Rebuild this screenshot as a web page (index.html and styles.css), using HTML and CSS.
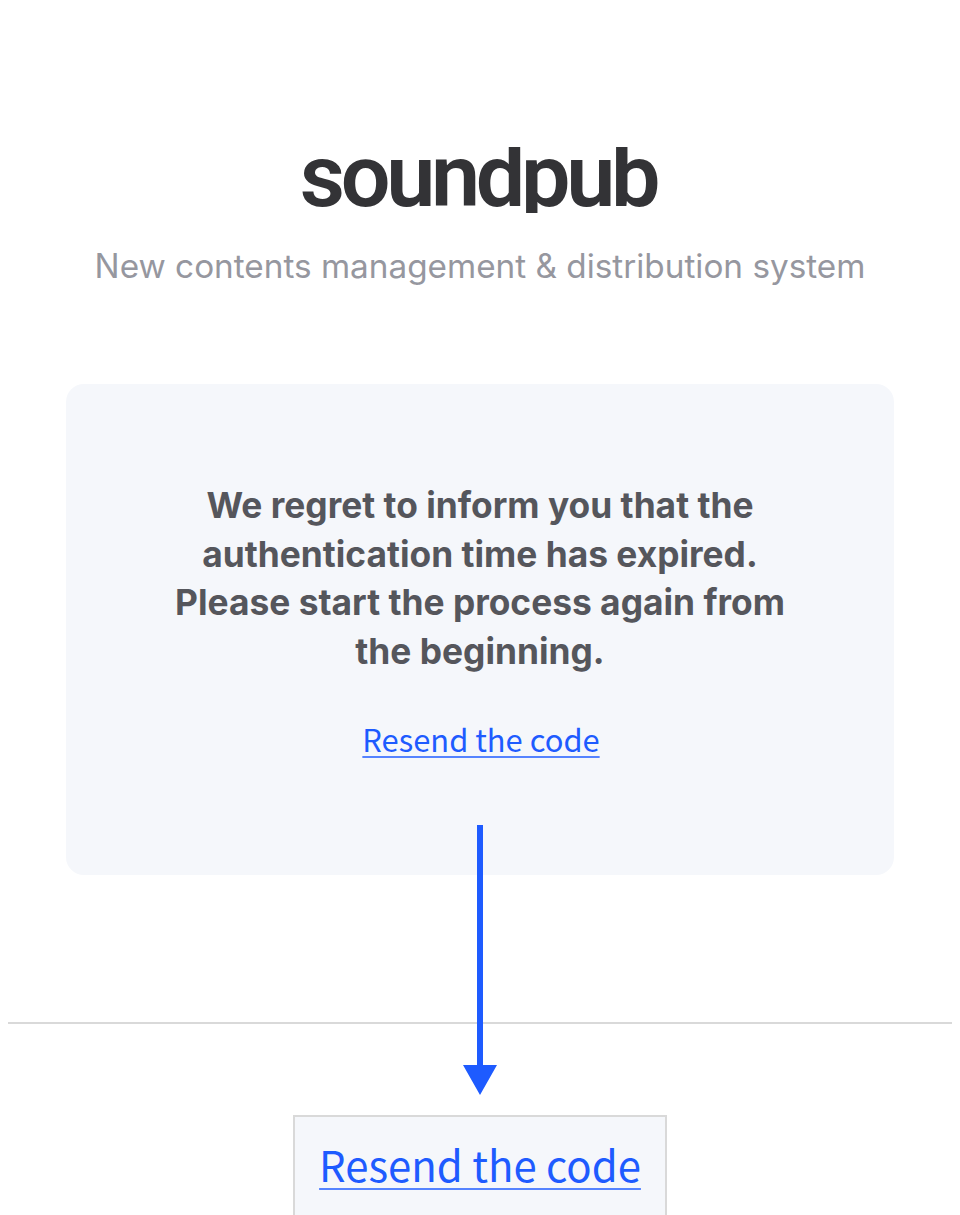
FILE: index.html
```html
<!DOCTYPE html>
<html lang="en">
<head>
  <meta charset="UTF-8">
  <title>soundpub</title>
  <link rel="stylesheet" href="styles.css">
</head>
<body>
  <main class="card">
    <h1 class="logo">soundpub</h1>
    <p class="tagline">New contents management &amp; distribution system</p>
    <section class="notice">
      <p class="message">We regret to inform you that the<br>authentication time has expired.<br>Please start the process again from<br>the beginning.</p>
      <a class="resend" href="#">Resend the code</a>
      <svg class="arrow" width="34" height="270" viewBox="0 0 34 270">
        <path d="M14 0h6v240h14l-17 30L0 240h14z" fill="#1e5bff"/>
      </svg>
    </section>
  </main>
  <div class="callout">
    <a class="resend resend-large" href="#">Resend the code</a>
  </div>
</body>
</html>
```

FILE: styles.css
```css
* {
  box-sizing: border-box;
}
body {
  margin: 0;
  height: 1215px;
  overflow: hidden;
  background: #fff;
  font-family: Inter, sans-serif;
  text-align: center;
}
.card {
  height: 1024px;
  padding: 147px 66px 0;
  background: linear-gradient(#d9d9d9, #d9d9d9) center bottom / 944px 2px no-repeat;
}
/* short ascenders and descenders */
.logo {
  height: 66px;
  margin: 0;
  padding-right: 4px;
  overflow: hidden;
  font-family: Roboto, sans-serif;
  font-size: 88px;
  line-height: 58px;
  font-weight: 600;
  letter-spacing: -4.3px;
  color: #333336;
}
.tagline {
  margin: 33px 0 0;
  font-size: 33.3px;
  line-height: 40px;
  color: #96979f;
  white-space: nowrap;
}
.notice {
  position: relative;
  height: 491px;
  margin-top: 98px;
  padding-top: 98px;
  background: #f5f7fb;
  border-radius: 18px;
}
.message {
  margin: 0;
  font-size: 35.35px;
  line-height: 48.6px;
  font-weight: 700;
  color: #55565c;
}
.resend {
  display: inline-block;
  margin: 39px 0 0 2px;
  font-family: "Noto Sans CJK KR", sans-serif;
  font-size: 30.9px;
  line-height: 48px;
  color: #1e5bff;
  text-decoration-color: #5583ff;
  text-decoration-thickness: 2px;
  text-underline-offset: 4px;
  text-decoration-skip-ink: none;
}
.arrow {
  position: absolute;
  left: 397px;
  top: 441px;
}
.callout {
  width: 374px;
  height: 110px;
  margin: 91px auto 0;
  padding-top: 14px;
  border: 2px solid #d9d9d9;
  background: #f5f7fb;
}
.resend-large {
  margin: 0;
  font-size: 41.9px;
  line-height: 66px;
  text-underline-offset: 6px;
}
```
